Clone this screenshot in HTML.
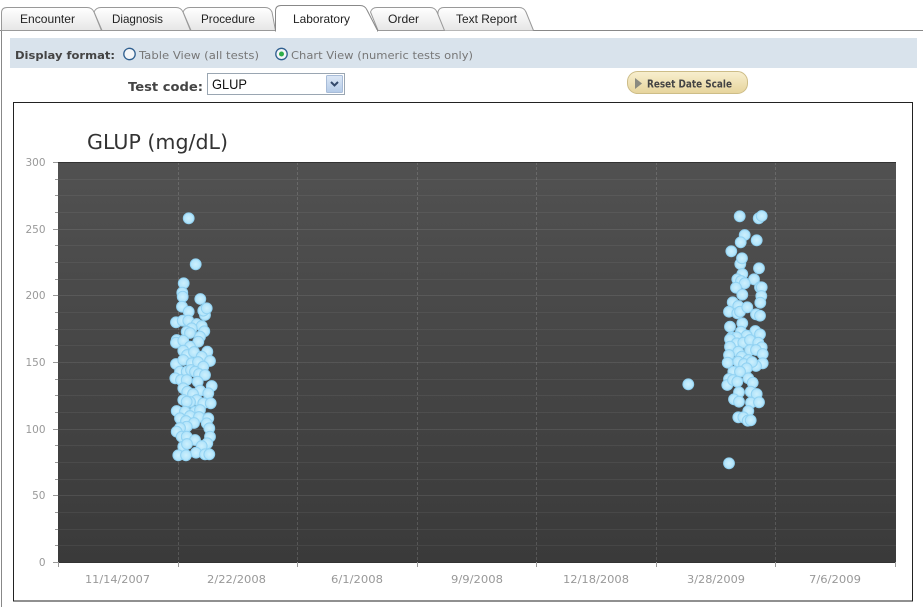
<!DOCTYPE html>
<html>
<head>
<meta charset="utf-8">
<style>
html,body{margin:0;padding:0;background:#fff;width:923px;height:607px;overflow:hidden}
svg{display:block}
.tab{font:12px "Liberation Sans",sans-serif;fill:#222}
.v{font:11px "DejaVu Sans",sans-serif;fill:#777}
.ax{font:10.5px "DejaVu Sans",sans-serif;fill:#999}
.d circle{r:5.4px;fill:url(#dot);stroke:#92d2f2;stroke-width:1}
.h{stroke:#fff;stroke-opacity:.06;stroke-width:1;fill:none}
.m{stroke:#fff;stroke-opacity:.09;stroke-width:1;fill:none}
.g{stroke:#fff;stroke-opacity:.14;stroke-width:1;stroke-dasharray:3 2;fill:none}
.t{stroke:#999;stroke-width:1;fill:none}
</style>
</head>
<body>
<svg width="923" height="607" viewBox="0 0 923 607" xmlns="http://www.w3.org/2000/svg">
<defs>
<linearGradient id="tb" x1="0" y1="0" x2="0" y2="1"><stop offset="0" stop-color="#fff"/><stop offset="1" stop-color="#e6e6e6"/></linearGradient>
<linearGradient id="pl" x1="0" y1="0" x2="0" y2="1"><stop offset="0" stop-color="#515151"/><stop offset="1" stop-color="#3a3a3a"/></linearGradient>
<linearGradient id="bt" x1="0" y1="0" x2="0" y2="1"><stop offset="0" stop-color="#f8efcf"/><stop offset="1" stop-color="#e6d49c"/></linearGradient>
<linearGradient id="ab" x1="0" y1="0" x2="0" y2="1"><stop offset="0" stop-color="#dde8f6"/><stop offset="1" stop-color="#b4cbe8"/></linearGradient>
<radialGradient id="dot" cx=".5" cy=".5" r=".5"><stop offset="0" stop-color="#cdf0fd"/><stop offset="1" stop-color="#aee2fa"/></radialGradient>
</defs>

<rect x="1" y="30" width="1" height="577" fill="#888"/>
<rect x="0" y="30" width="923" height="1" fill="#888"/>

<g fill="url(#tb)" stroke="#999">
<path d="M437.500 30.500L438 12Q439 7.500 444 7.500H519Q524 7.500 526 12L533.500 30.500"/>
<path d="M370.500 12Q372 7.500 377 7.500H430Q435 7.500 437 12L444.500 30.500H378Z"/>
<path d="M183 12Q185 7.500 190 7.500H265Q270 7.500 272 12L275.500 30.500H191Z"/>
<path d="M94 12Q96 7.500 101 7.500H176Q181 7.500 183 12L190.500 30.500H102Z"/>
<path d="M1.500 30.500V13Q1.500 7.500 7 7.500H87Q92 7.500 94 12L101.500 30.500Z"/>
</g>
<path d="M275.500 31V11Q275.500 5.500 281 5.500H360Q365 5.500 367 10L377.500 30.500V31Z" fill="#fff" stroke="#888"/>
<rect x="276" y="30" width="101" height="2" fill="#fff"/>

<text class="tab" x="20" y="23" textLength="55" lengthAdjust="spacingAndGlyphs">Encounter</text>
<text class="tab" x="112" y="23" textLength="51" lengthAdjust="spacingAndGlyphs">Diagnosis</text>
<text class="tab" x="201" y="23" textLength="54" lengthAdjust="spacingAndGlyphs">Procedure</text>
<text class="tab" x="293" y="23" textLength="57" lengthAdjust="spacingAndGlyphs">Laboratory</text>
<text class="tab" x="388" y="23" textLength="31" lengthAdjust="spacingAndGlyphs">Order</text>
<text class="tab" x="456" y="23" textLength="61" lengthAdjust="spacingAndGlyphs">Text Report</text>

<rect x="10" y="38" width="907" height="30" fill="#d9e3ec"/>
<text x="15" y="59" font-family="DejaVu Sans" font-weight="bold" font-size="11" fill="#444" textLength="100" lengthAdjust="spacingAndGlyphs">Display format:</text>
<circle cx="129.500" cy="54" r="5.700" fill="#f4f6f8" stroke="#2f5f8f" stroke-width="1.300"/>
<text class="v" x="139" y="59" textLength="120" lengthAdjust="spacingAndGlyphs">Table View (all tests)</text>
<circle cx="281.500" cy="54" r="5.700" fill="#f4f6f8" stroke="#2f5f8f" stroke-width="1.300"/>
<circle cx="281.500" cy="54" r="2.500" fill="#2fae4a"/>
<text class="v" x="291" y="59" textLength="182" lengthAdjust="spacingAndGlyphs">Chart View (numeric tests only)</text>

<text x="128" y="91" font-family="DejaVu Sans" font-weight="bold" font-size="12" fill="#444" textLength="75" lengthAdjust="spacingAndGlyphs">Test code:</text>
<rect x="207.500" y="73.500" width="137" height="21" fill="#fff" stroke="#9aa6b2"/>
<text x="212" y="89" font-family="Liberation Sans" font-size="14" fill="#111" textLength="35" lengthAdjust="spacingAndGlyphs">GLUP</text>
<rect x="326.500" y="75.500" width="16" height="17" rx="1" fill="url(#ab)" stroke="#a8bcd8"/>
<path d="M331 82L334.500 85.500L338 82" fill="none" stroke="#33496b" stroke-width="2"/>

<rect x="627.500" y="71.500" width="120" height="22" rx="10" fill="url(#bt)" stroke="#cdbd88"/>
<path d="M635 78L642 83.500L635 89Z" fill="#8a8a80"/>
<text x="647" y="87.500" font-family="DejaVu Sans" font-weight="bold" font-size="10.500" fill="#444" textLength="85" lengthAdjust="spacingAndGlyphs">Reset Date Scale</text>

<rect x="13.500" y="102.500" width="899" height="498.500" fill="#fff" stroke="#222"/>
<text x="87" y="149" font-family="DejaVu Sans" font-size="20" fill="#333" textLength="141" lengthAdjust="spacingAndGlyphs">GLUP (mg/dL)</text>

<rect x="58" y="162" width="838" height="400.500" fill="url(#pl)"/>
<path class="h" d="M58 179.500H896M58 195.500H896M58 212.500H896M58 245.500H896M58 262.500H896M58 279.500H896M58 312.500H896M58 329.500H896M58 345.500H896M58 379.500H896M58 395.500H896M58 412.500H896M58 445.500H896M58 462.500H896M58 479.500H896M58 512.500H896M58 529.500H896M58 545.500H896"/>
<path class="m" d="M58 229.500H896M58 295.500H896M58 362.500H896M58 429.500H896M58 495.500H896"/>
<path class="g" d="M178.500 162V562M297.500 162V562M417.500 162V562M536.500 162V562M656.500 162V562M775.500 162V562"/>
<rect x="58" y="162" width="838" height="1" fill="#333"/>
<rect x="58" y="562" width="838" height="1" fill="#333"/>
<path class="t" d="M53 162.500H58M53 229.500H58M53 295.500H58M53 362.500H58M53 429.500H58M53 495.500H58M53 562.500H58M55 179.500H58M55 195.500H58M55 212.500H58M55 245.500H58M55 262.500H58M55 279.500H58M55 312.500H58M55 329.500H58M55 345.500H58M55 379.500H58M55 395.500H58M55 412.500H58M55 445.500H58M55 462.500H58M55 479.500H58M55 512.500H58M55 529.500H58M55 545.500H58M58.500 562V567M178.500 562V567M297.500 562V567M417.500 562V567M536.500 562V567M656.500 562V567M775.500 562V567M895.500 562V567"/>

<g class="ax" text-anchor="end">
<text x="45.500" y="166">300</text>
<text x="45.500" y="233">250</text>
<text x="45.500" y="299">200</text>
<text x="45.500" y="366">150</text>
<text x="45.500" y="433">100</text>
<text x="45.500" y="499">50</text>
<text x="45.500" y="566">0</text>
</g>
<g class="ax">
<text x="85" y="583" textLength="65" lengthAdjust="spacingAndGlyphs">11/14/2007</text>
<text x="207" y="583" textLength="59" lengthAdjust="spacingAndGlyphs">2/22/2008</text>
<text x="331" y="583" textLength="52" lengthAdjust="spacingAndGlyphs">6/1/2008</text>
<text x="451" y="583" textLength="52" lengthAdjust="spacingAndGlyphs">9/9/2008</text>
<text x="563" y="583" textLength="66" lengthAdjust="spacingAndGlyphs">12/18/2008</text>
<text x="687" y="583" textLength="58" lengthAdjust="spacingAndGlyphs">3/28/2009</text>
<text x="809" y="583" textLength="52" lengthAdjust="spacingAndGlyphs">7/6/2009</text>
</g>

<g class="d">
<circle cx="188.700" cy="218.300"/><circle cx="195.700" cy="264.300"/><circle cx="183.700" cy="283.300"/><circle cx="182.300" cy="292.700"/><circle cx="182.700" cy="296.700"/><circle cx="200.300" cy="299"/><circle cx="182" cy="306.700"/><circle cx="205" cy="315"/><circle cx="203.300" cy="310.700"/><circle cx="206.700" cy="308.300"/><circle cx="188.700" cy="311.700"/><circle cx="176" cy="322.300"/><circle cx="182.700" cy="320.700"/><circle cx="188.300" cy="320.700"/><circle cx="196.700" cy="324"/><circle cx="201.700" cy="326"/><circle cx="191.700" cy="328.300"/><circle cx="186.700" cy="331.700"/><circle cx="190" cy="333"/><circle cx="204.300" cy="331.300"/><circle cx="200" cy="336.700"/><circle cx="176.700" cy="340"/><circle cx="176" cy="342.700"/><circle cx="183.300" cy="340.700"/><circle cx="198.300" cy="341.700"/><circle cx="190" cy="346.700"/><circle cx="207.300" cy="351.700"/><circle cx="183.300" cy="350.700"/><circle cx="187" cy="355"/><circle cx="194" cy="352"/><circle cx="201.700" cy="356.700"/><circle cx="210" cy="361"/><circle cx="176" cy="364"/><circle cx="183.300" cy="360"/><circle cx="191.700" cy="363.300"/><circle cx="198" cy="362"/><circle cx="203.300" cy="366.700"/><circle cx="180" cy="371.700"/><circle cx="186.700" cy="371.700"/><circle cx="191" cy="370"/><circle cx="195" cy="371.700"/><circle cx="199" cy="374"/><circle cx="205" cy="375"/><circle cx="175.300" cy="378.300"/><circle cx="181" cy="380"/><circle cx="186.700" cy="380"/><circle cx="197.700" cy="381.700"/><circle cx="211.700" cy="386"/><circle cx="183.300" cy="388.300"/><circle cx="200" cy="390.700"/><circle cx="208.300" cy="393.300"/><circle cx="187.300" cy="391.700"/><circle cx="193" cy="394"/><circle cx="183.300" cy="400"/><circle cx="196.700" cy="400"/><circle cx="190" cy="402"/><circle cx="203.300" cy="403.300"/><circle cx="210.700" cy="403.300"/><circle cx="186.700" cy="401.700"/><circle cx="176.700" cy="411"/><circle cx="185" cy="411.700"/><circle cx="195" cy="411.700"/><circle cx="200" cy="410"/><circle cx="190" cy="416"/><circle cx="199" cy="417"/><circle cx="208.300" cy="418.300"/><circle cx="180" cy="418.300"/><circle cx="186" cy="421"/><circle cx="194" cy="423"/><circle cx="206.700" cy="423.300"/><circle cx="186.700" cy="426.700"/><circle cx="180" cy="428"/><circle cx="176.700" cy="431.700"/><circle cx="209.300" cy="428.300"/><circle cx="181.700" cy="436.700"/><circle cx="210" cy="436.700"/><circle cx="186.700" cy="436.700"/><circle cx="195" cy="440"/><circle cx="207.300" cy="443.300"/><circle cx="201.700" cy="446"/><circle cx="183.300" cy="446.700"/><circle cx="187" cy="444"/><circle cx="196" cy="452.700"/><circle cx="178.300" cy="455.300"/><circle cx="186" cy="455.300"/><circle cx="205" cy="454.300"/><circle cx="209.300" cy="454.300"/>

<circle cx="739.700" cy="216.300"/><circle cx="758.700" cy="218.300"/><circle cx="761.700" cy="216"/><circle cx="744.700" cy="235"/><circle cx="740.700" cy="242.300"/><circle cx="756.700" cy="240.300"/><circle cx="731.300" cy="251.300"/><circle cx="740.300" cy="264"/><circle cx="742" cy="258.300"/><circle cx="759" cy="268.300"/><circle cx="742.300" cy="274"/><circle cx="737.300" cy="279.300"/><circle cx="741" cy="281"/><circle cx="754" cy="279.300"/><circle cx="744.700" cy="283.300"/><circle cx="736" cy="287.700"/><circle cx="760" cy="287.300"/><circle cx="761.700" cy="287.300"/><circle cx="742.300" cy="294.700"/><circle cx="761.300" cy="296"/><circle cx="760.300" cy="302.700"/><circle cx="732.700" cy="302.300"/><circle cx="729" cy="311.700"/><circle cx="738.300" cy="306"/><circle cx="737.300" cy="313.300"/><circle cx="740" cy="311.700"/><circle cx="747.300" cy="307.300"/><circle cx="756" cy="314.300"/><circle cx="760" cy="315.700"/><circle cx="730" cy="326.700"/><circle cx="742.300" cy="323.300"/><circle cx="741" cy="331.700"/><circle cx="755.300" cy="331"/><circle cx="760" cy="334.300"/><circle cx="746.700" cy="335.700"/><circle cx="731.700" cy="337.300"/><circle cx="736.700" cy="337.300"/><circle cx="730" cy="339.300"/><circle cx="736.700" cy="343.300"/><circle cx="743.300" cy="342.700"/><circle cx="750" cy="340"/><circle cx="758.300" cy="342.700"/><circle cx="761.700" cy="347.300"/><circle cx="730" cy="346.700"/><circle cx="738.300" cy="351.700"/><circle cx="750" cy="350"/><circle cx="756" cy="350"/><circle cx="762.700" cy="354"/><circle cx="729" cy="355"/><circle cx="741.700" cy="356.700"/><circle cx="748.300" cy="360"/><circle cx="762.700" cy="363.300"/><circle cx="727.700" cy="362.700"/><circle cx="756" cy="366"/><circle cx="738.300" cy="361.700"/><circle cx="744" cy="364"/><circle cx="752" cy="362"/><circle cx="746.700" cy="368.300"/><circle cx="733.300" cy="371.700"/><circle cx="740" cy="371.700"/><circle cx="729" cy="379"/><circle cx="727.300" cy="385"/><circle cx="733" cy="380"/><circle cx="737.300" cy="381.700"/><circle cx="748.300" cy="378.300"/><circle cx="752.700" cy="382.700"/><circle cx="739" cy="392.300"/><circle cx="750.700" cy="391.700"/><circle cx="756.700" cy="394"/><circle cx="734" cy="399.300"/><circle cx="739" cy="401.700"/><circle cx="751" cy="402.700"/><circle cx="759" cy="402.300"/><circle cx="748.300" cy="411"/><circle cx="738.300" cy="417.300"/><circle cx="743.300" cy="417.300"/><circle cx="747.700" cy="420.700"/><circle cx="750.700" cy="420.300"/>
<circle cx="688.300" cy="384.300"/><circle cx="729" cy="463.300"/>
</g>
</svg>
</body>
</html>
